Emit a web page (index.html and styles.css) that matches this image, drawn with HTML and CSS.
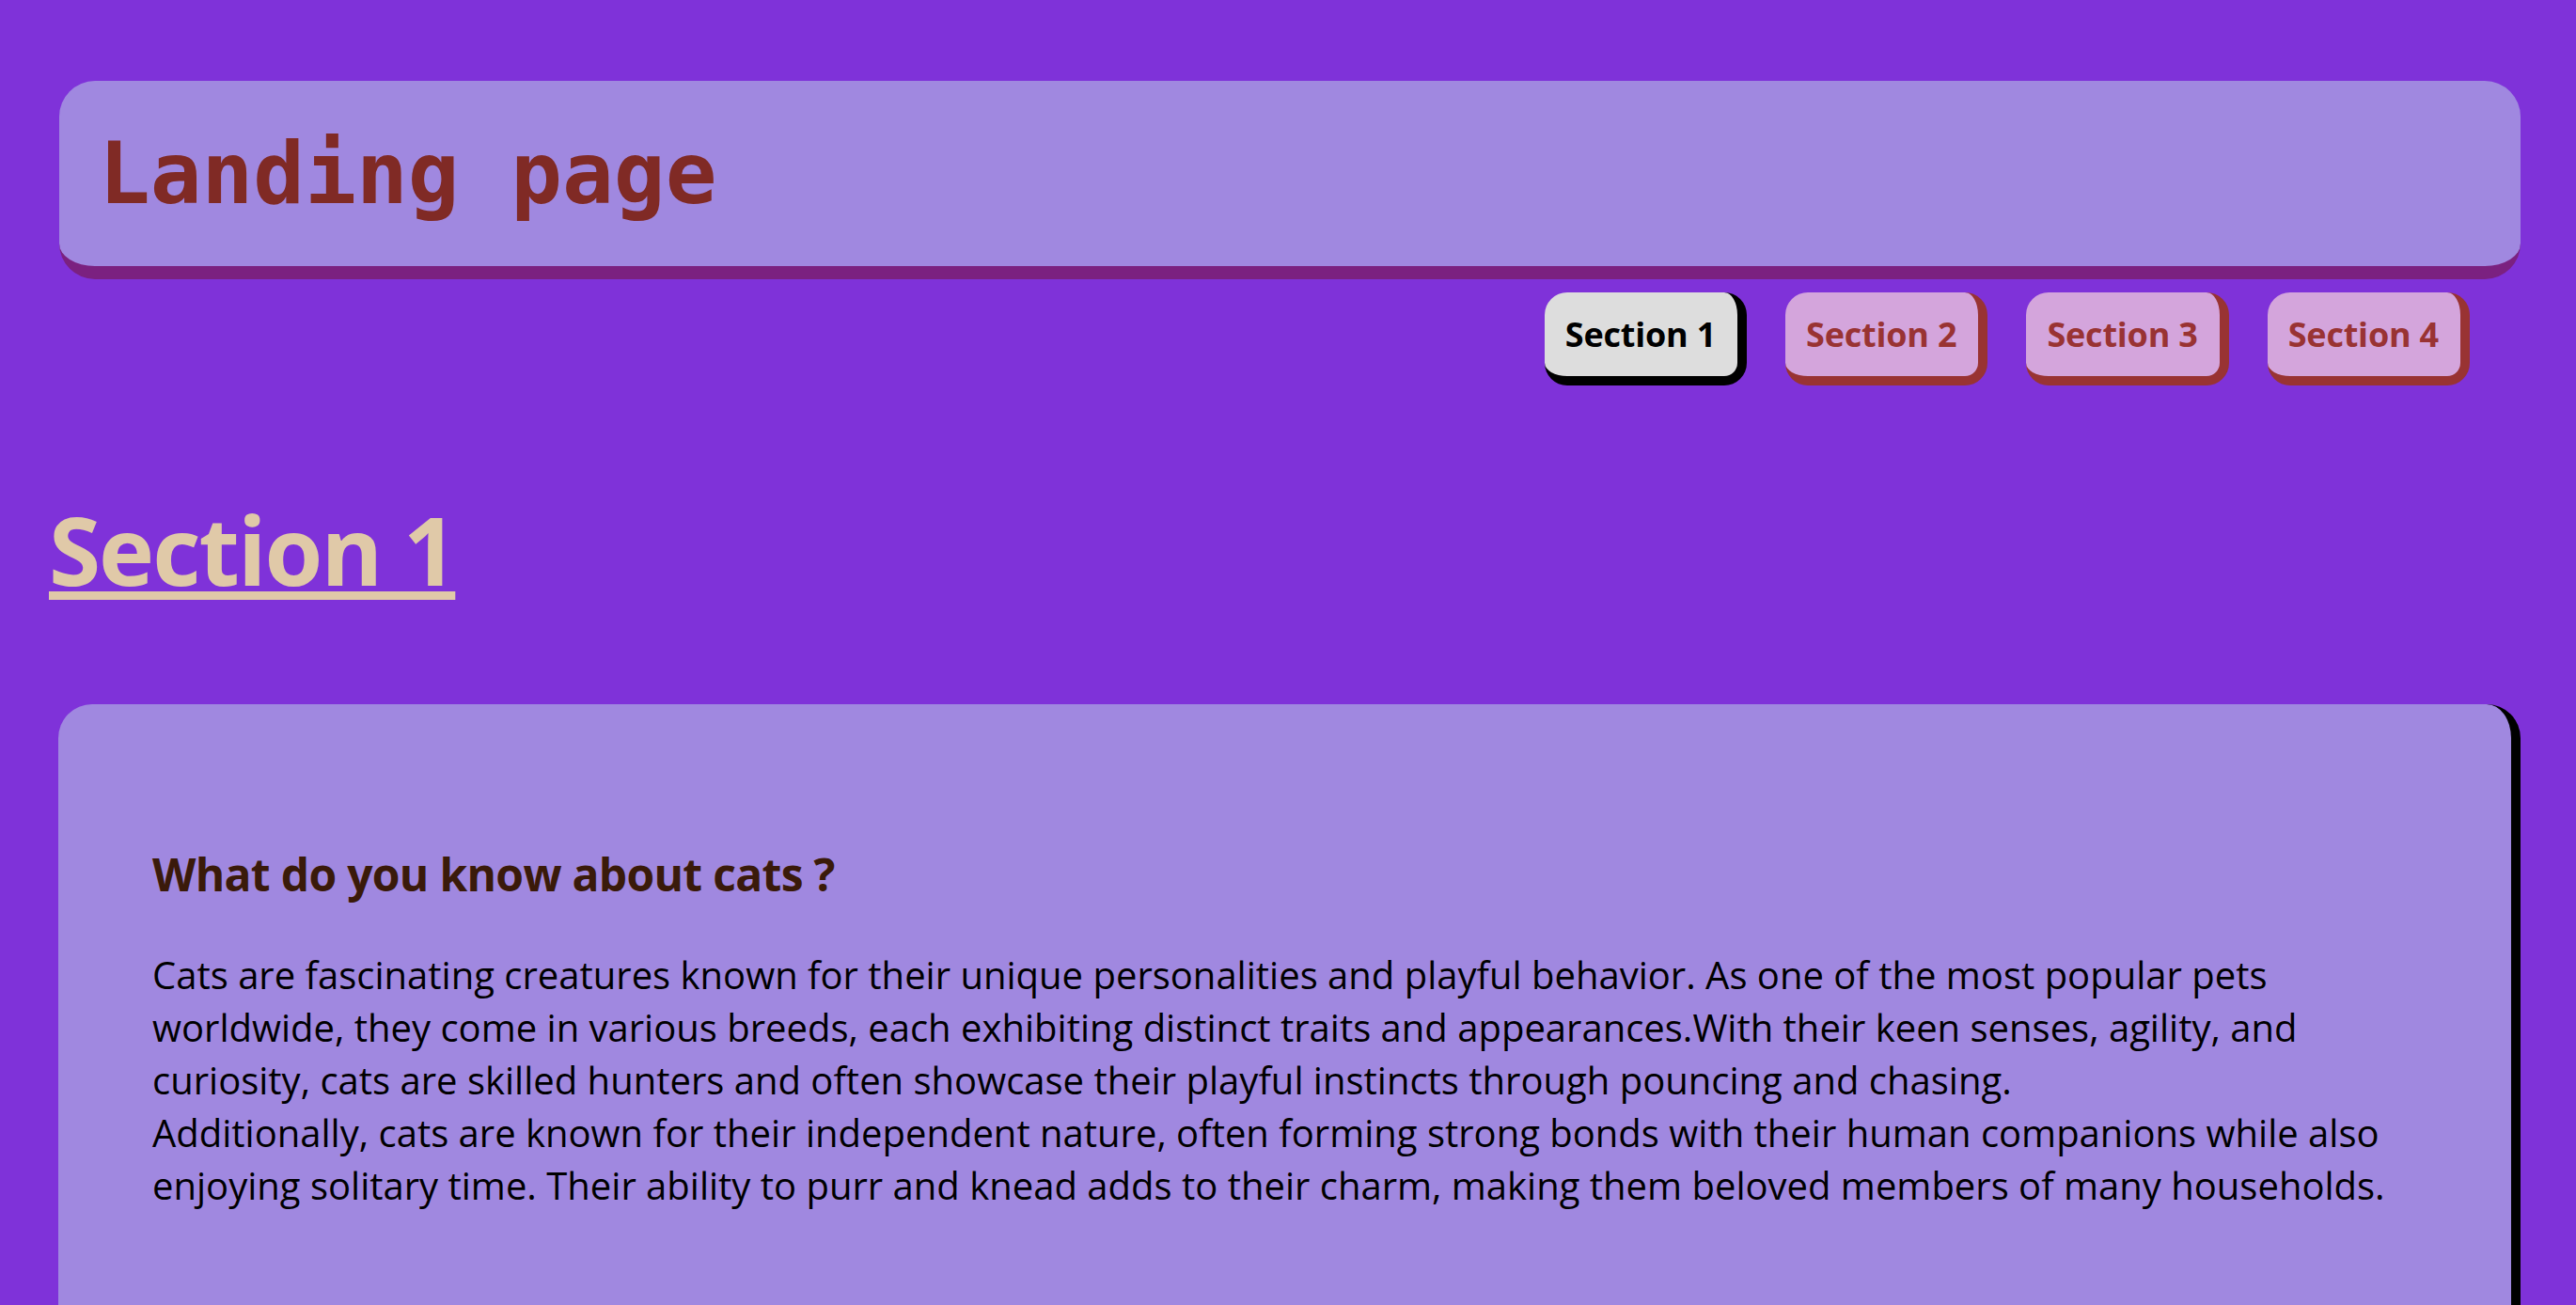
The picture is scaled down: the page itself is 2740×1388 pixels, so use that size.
FILE: index.html
```html
<!DOCTYPE html>
<html lang="en">
<head>
<meta charset="utf-8">
<title>Landing page</title>
<link rel="stylesheet" href="styles.css">
</head>
<body>
  <header class="page-header">
    <h1 class="page-title">Landing page</h1>
  </header>
  <nav class="nav">
    <ul class="nav-list">
      <li><a class="nav-link is-active" href="#section1">Section 1</a></li>
      <li><a class="nav-link" href="#section2">Section 2</a></li>
      <li><a class="nav-link" href="#section3">Section 3</a></li>
      <li><a class="nav-link" href="#section4">Section 4</a></li>
    </ul>
  </nav>
  <main>
    <section class="section" id="section1">
      <h2 class="section-title">Section 1</h2>
      <div class="card">
        <h3 class="card-title">What do you know about cats ?</h3>
        <p class="card-text">Cats are fascinating creatures known for their unique personalities and playful behavior. As one of the most popular pets worldwide, they come in various breeds, each exhibiting distinct traits and appearances.With their keen senses, agility, and curiosity, cats are skilled hunters and often showcase their playful instincts through pouncing and chasing.<br>Additionally, cats are known for their independent nature, often forming strong bonds with their human companions while also enjoying solitary time. Their ability to purr and knead adds to their charm, making them beloved members of many households.</p>
      </div>
    </section>
  </main>
</body>
</html>
```
FILE: styles.css
```css
* { box-sizing: border-box; }

html, body {
  margin: 0;
  padding: 0;
}

body {
  background: #7f32d9;
  font-family: "Open Sans", "DejaVu Sans", sans-serif;
  overflow: hidden;
}

.page-header {
  margin: 86px 59px 0 63px;
  height: 211px;
  background: #a088e0;
  border-bottom: 14px solid #7b2180;
  border-radius: 38px;
  display: flex;
  align-items: center;
  padding: 0 42px;
}

.page-title {
  margin: 0;
  font-family: "DejaVu Sans Mono", "Liberation Mono", monospace;
  font-weight: 700;
  font-size: 91px;
  line-height: 1;
  color: #802a25;
}

.nav {
  margin: 14px 113px 0 0;
}

.nav-list {
  list-style: none;
  margin: 0;
  padding: 0;
  display: flex;
  justify-content: flex-end;
  gap: 41px;
}

.nav-link {
  display: block;
  height: 99px;
  padding: 20px 23px 0 22px;
  line-height: 49px;
  font-size: 36px;
  font-weight: 700;
  letter-spacing: -0.2px;
  text-decoration: none;
  color: #993333;
  background: #d4a5dc;
  border-style: solid;
  border-color: #993333;
  border-width: 0 10px 10px 0;
  border-radius: 24px;
}

.nav-link.is-active {
  color: #000;
  background: #dddddd;
  border-color: #000;
}

.section-title {
  margin: 106px 0 0 52px;
  font-family: "Open Sans", "Noto Sans", sans-serif;
  font-weight: 700;
  font-size: 100px;
  line-height: 136px;
  letter-spacing: -2px;
  color: #e0c9a8;
  text-decoration: underline;
  text-decoration-thickness: 9px;
  text-underline-offset: 6px;
}

.card {
  margin: 97px 59px 0 62px;
  padding: 100px;
  background: #a088e0;
  border-right: 10px solid #000;
  border-radius: 36px;
  min-height: 800px;
}

.card-title {
  margin: 49px 0 0;
  font-size: 48px;
  line-height: 64px;
  font-weight: 700;
  letter-spacing: -0.7px;
  color: #3a1a0a;
}

.card-text {
  margin: 47px 0 0;
  font-size: 40px;
  line-height: 56px;
  color: #000;
}
```
